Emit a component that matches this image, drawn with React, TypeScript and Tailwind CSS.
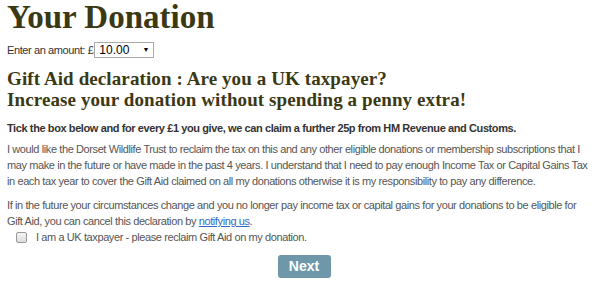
import React from 'react';

const serif = 'font-["Liberation_Serif",serif]';

export default function App() {
  return (
    <div className="w-[608px] h-[289px] bg-white px-[7px] font-['Liberation_Sans',Arial,sans-serif] text-[#555] tracking-[-0.4px]">
      <h1 className={`${serif} text-[33px] leading-[34px] font-bold text-[#3b3814] tracking-normal`}>
        Your Donation
      </h1>

      {/* Amount */}
      <div className="mt-[8px] flex items-center text-[11px] leading-[16px] text-[#333]">
        <span>Enter an amount: £</span>
        <div className="ml-[1px] w-[60px] h-[16px] border border-[#a9a9a9] flex items-center justify-between px-[4px] text-[12px] text-black tracking-normal">
          <span>10.00</span>
          <span className="text-[7px]">▼</span>
        </div>
      </div>

      {/* Gift Aid */}
      <h2 className={`${serif} mt-[10px] text-[19px] leading-[21px] font-bold text-[#3b3814] tracking-[0.1px]`}>
        Gift Aid declaration : Are you a UK taxpayer?
        <br />
        Increase your donation without spending a penny extra!
      </h2>

      <p className="mt-[11px] text-[11px] leading-[14px] font-bold text-[#333]">
        Tick the box below and for every £1 you give, we can claim a further 25p from HM Revenue and Customs.
      </p>

      <p className="mt-[6px] text-[11px] leading-[16px] whitespace-nowrap">
        I would like the Dorset Wildlife Trust to reclaim the tax on this and any other eligible donations or membership subscriptions that I
        <br />
        may make in the future or have made in the past 4 years. I understand that I need to pay enough Income Tax or Capital Gains Tax
        <br />
        in each tax year to cover the Gift Aid claimed on all my donations otherwise it is my responsibility to pay any difference.
      </p>

      <p className="mt-[8px] text-[11px] leading-[16px] whitespace-nowrap">
        If in the future your circumstances change and you no longer pay income tax or capital gains for your donations to be eligible for
        <br />
        Gift Aid, you can cancel this declaration by{' '}
        <a href="#" className="text-[#3366cc] underline">notifying us</a>.
      </p>

      <label className="mt-[1px] ml-[9px] flex items-center gap-[9px] text-[11px] leading-[14px]">
        <span className="w-[11px] h-[11px] rounded-[2px] border border-[#999] bg-gradient-to-b from-[#f4f4f4] to-[#dcdcdc]" />
        I am a UK taxpayer - please reclaim Gift Aid on my donation.
      </label>

      <div className="mt-[11px] flex justify-center">
        <button className="w-[53px] h-[23px] rounded-[3px] bg-[#6e98aa] text-white text-[14px] font-bold tracking-normal">
          Next
        </button>
      </div>
    </div>
  );
}
